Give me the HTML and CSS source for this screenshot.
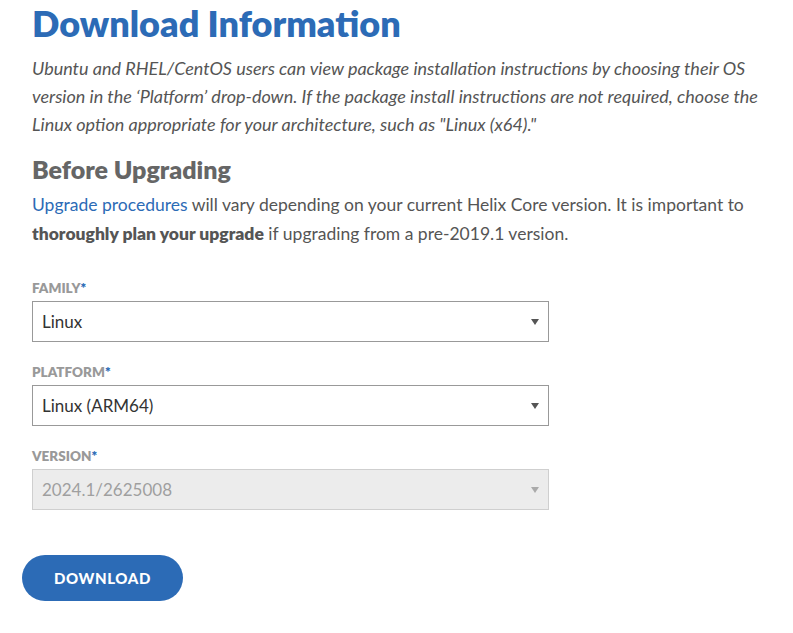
FILE: index.html
```html
<!DOCTYPE html>
<html lang="en">
<head>
    <meta charset="UTF-8">
    <meta name="viewport" content="width=device-width, initial-scale=1.0">
    <title>Download Information</title>
    <link rel="stylesheet" href="styles.css">
</head>
<body>
    <main class="download">
        <h1>Download Information</h1>
        <p class="note">Ubuntu and RHEL/CentOS users can view package installation instructions by choosing their OS version in the ‘Platform’ drop-down. If the package install instructions are not required, choose the Linux option appropriate for your architecture, such as "Linux (x64)."</p>

        <h2>Before Upgrading</h2>
        <p class="intro"><a href="#">Upgrade procedures</a> will vary depending on your current Helix Core version. It is important to <strong>thoroughly plan your upgrade</strong> if upgrading from a pre-2019.1 version.</p>

        <form class="download-form">
            <div class="field">
                <label for="family">Family<span>*</span></label>
                <div class="select">
                    <select id="family">
                        <option>Linux</option>
                    </select>
                </div>
            </div>
            <div class="field">
                <label for="platform">Platform<span>*</span></label>
                <div class="select">
                    <select id="platform">
                        <option>Linux (ARM64)</option>
                    </select>
                </div>
            </div>
            <div class="field">
                <label for="version">Version<span>*</span></label>
                <div class="select disabled">
                    <select id="version" disabled>
                        <option>2024.1/2625008</option>
                    </select>
                </div>
            </div>
            <button type="button">Download</button>
        </form>
    </main>
</body>
</html>
```

FILE: styles.css
```css
body {
    margin: 0;
    font-family: Lato, 'Open Sans', sans-serif;
    color: #555;
    background: #fff;
}

.download {
    padding: 0 18px 0 32px;
}

h1 {
    margin: 0;
    padding-top: 2px;
    font-size: 36px;
    line-height: 42px;
    font-weight: 800;
    color: #2c6bb6;
}

.note {
    margin: 10px 0 0;
    font-size: 18px;
    line-height: 28px;
    font-style: italic;
    color: #555;
}

h2 {
    margin: 16px 0 0;
    font-size: 25px;
    line-height: 30px;
    font-weight: 800;
    color: #666;
}

.intro {
    margin: 6px 0 0;
    font-size: 17.5px;
    line-height: 29px;
    color: #555;
}

.intro a {
    color: #2c6bb6;
    text-decoration: none;
}

.intro strong {
    font-weight: 800;
    color: #555;
}

.download-form {
    margin-top: 32px;
}

.field {
    margin-bottom: 22px;
}

.field label {
    display: block;
    font-size: 13.5px;
    line-height: 16px;
    font-weight: 800;
    text-transform: uppercase;
    color: #999;
    margin-bottom: 5px;
}

.field label span {
    color: #2c6bb6;
}

.select {
    position: relative;
    width: 517px;
}

.select::after {
    content: "";
    position: absolute;
    right: 10px;
    top: 18px;
    border-left: 4px solid transparent;
    border-right: 4px solid transparent;
    border-top: 6px solid #555;
    pointer-events: none;
}

.select select {
    display: block;
    width: 100%;
    height: 41px;
    padding: 0 30px 0 9px;
    border: 1px solid #999;
    border-radius: 0;
    background: #fff;
    font-family: Lato, 'Open Sans', sans-serif;
    font-size: 17px;
    color: #333;
    appearance: none;
    -webkit-appearance: none;
}

.select.disabled select {
    background: #e5e5e5;
    border-color: #bbb;
    color: #777;
}

.select.disabled::after {
    border-top-color: #aaa;
}

button {
    margin: 23px 0 0 -10px;
    width: 161px;
    height: 46px;
    border: none;
    border-radius: 23px;
    background: #2c6bb6;
    color: #fff;
    font-family: Lato, 'Open Sans', sans-serif;
    font-size: 15px;
    font-weight: 900;
    letter-spacing: 0.6px;
    text-transform: uppercase;
    cursor: pointer;
}
```
